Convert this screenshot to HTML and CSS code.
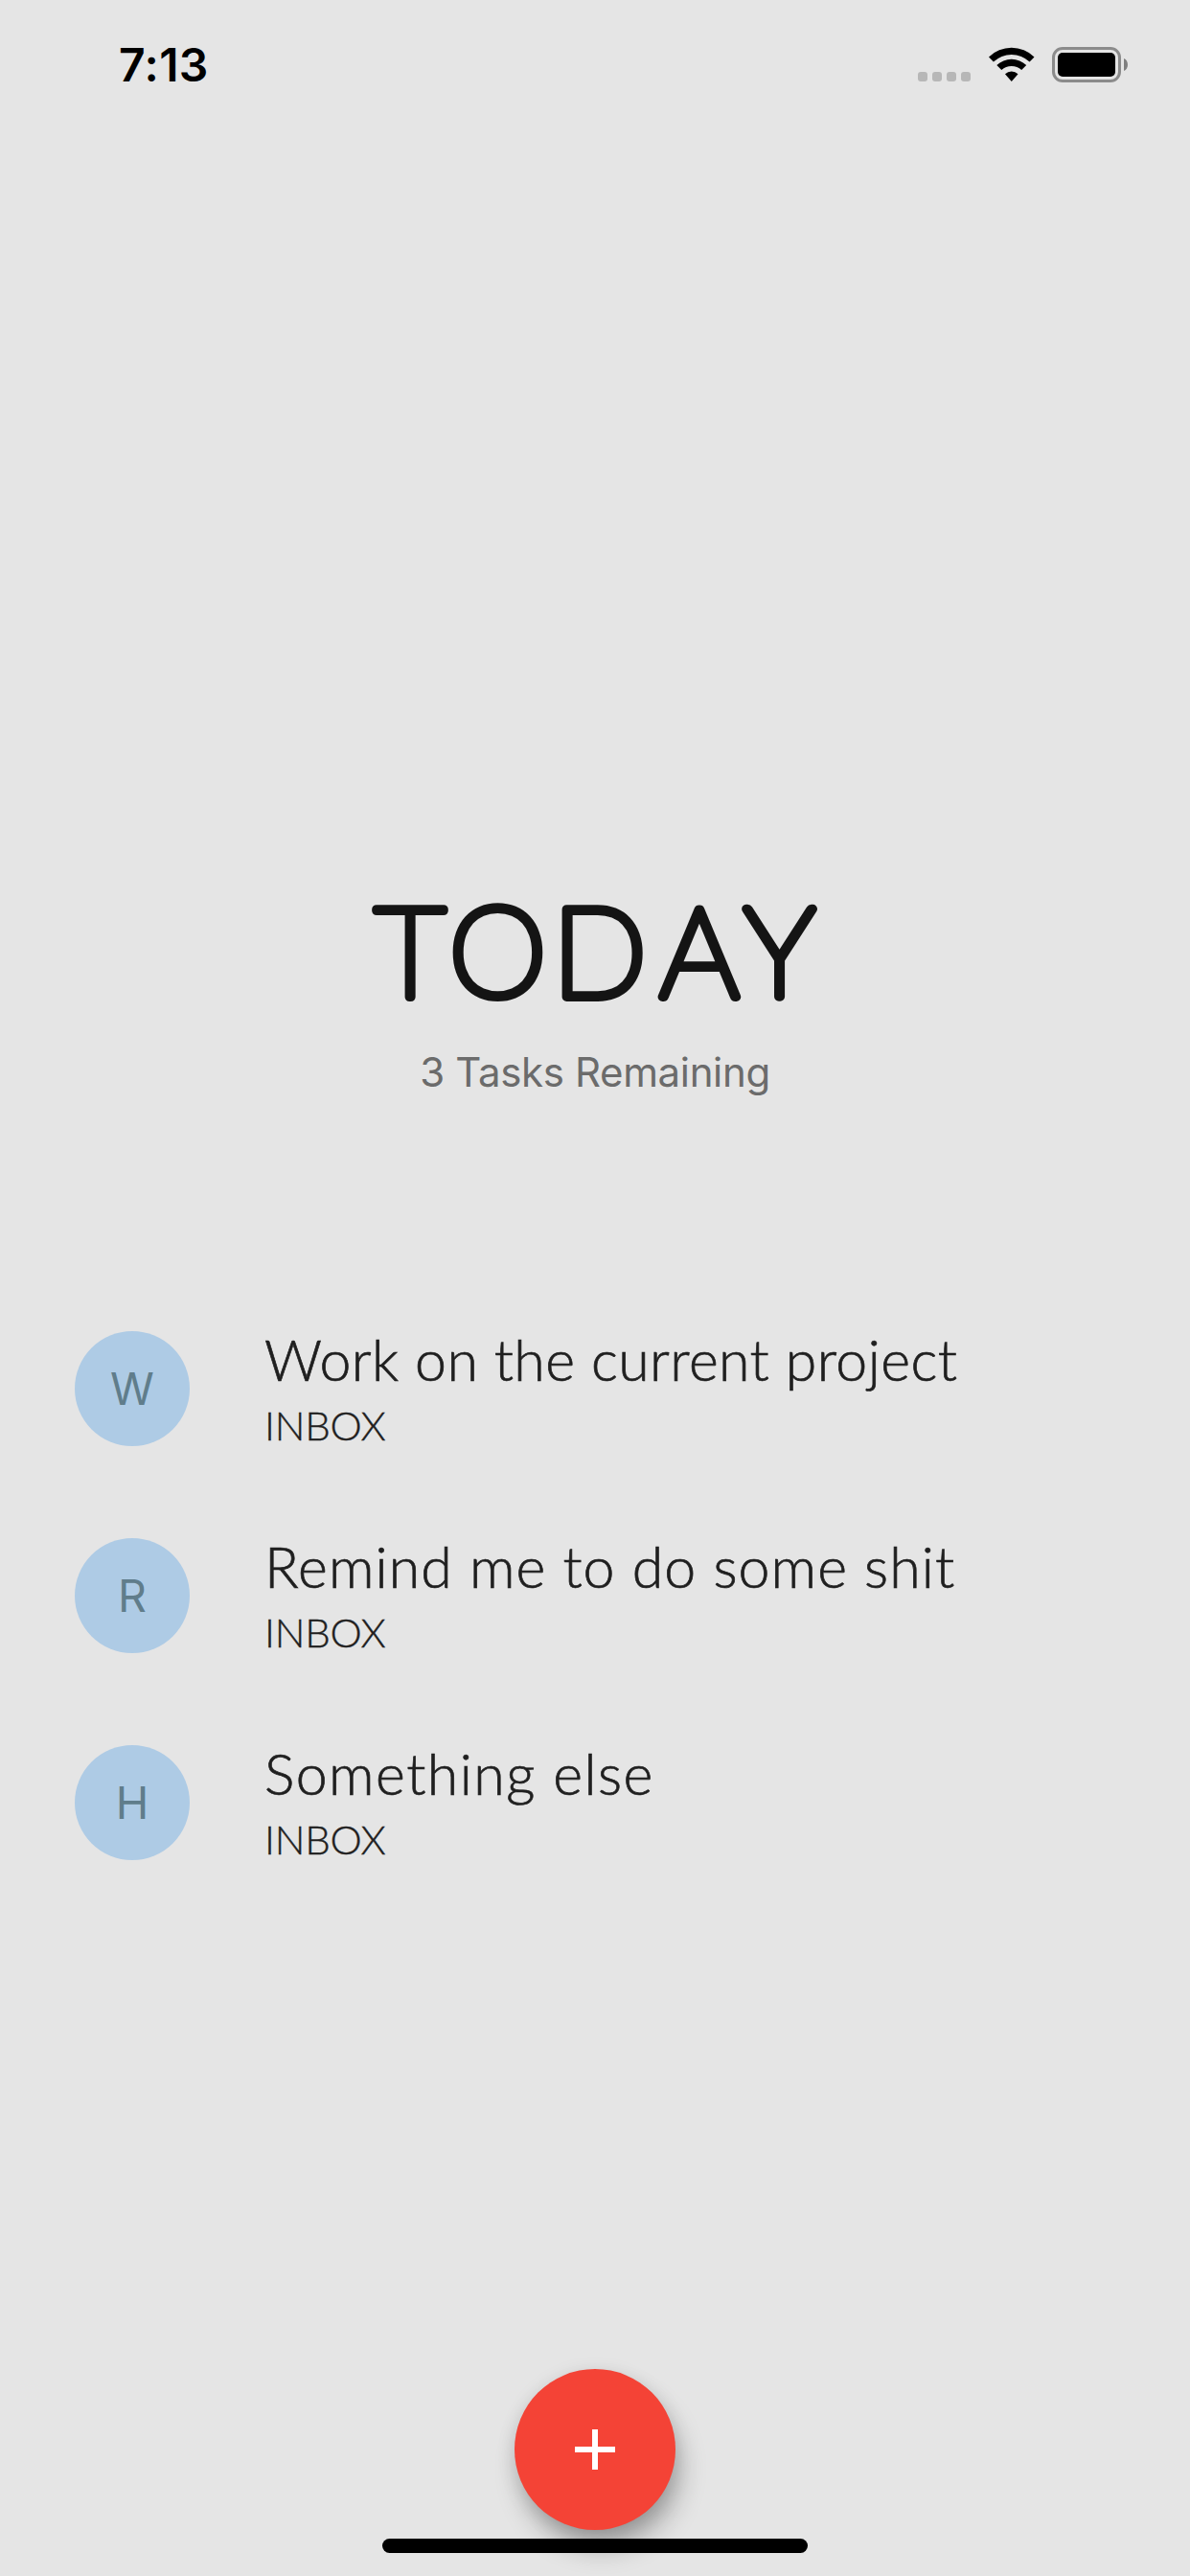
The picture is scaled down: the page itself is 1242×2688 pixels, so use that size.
FILE: index.html
```
<!DOCTYPE html>
<html lang="en">
<head>
<meta charset="utf-8">
<title>Today</title>
<link rel="stylesheet" href="styles.css">
</head>
<body>
<div class="screen">
  <header class="status">
    <span class="time">7:13</span>
    <div class="signals">
      <div class="dots"><i></i><i></i><i></i><i></i></div>
      <svg class="wifi" width="48" height="37" viewBox="0 0 48 37">
        <path d="M0 10.5A34 34 0 0 1 47.5 10.5L42.6 15.6A27 27 0 0 0 4.900 15.600Z"/>
        <path d="M8.300 19A22.300 22.300 0 0 1 39.200 19L34.200 24.100A15.200 15.200 0 0 0 13.300 24.100Z"/>
        <path d="M17 28.200A10 10 0 0 1 30.500 28.200L23.750 36Z"/>
      </svg>
      <svg class="battery" width="80" height="37" viewBox="0 0 80 37">
        <rect x="1.5" y="1.5" width="69" height="34" rx="9.5" fill="none" stroke="#8b8b8b" stroke-width="3"/>
        <rect x="6" y="6" width="60" height="25" rx="5"/>
        <path d="M75 12C80.300 14 80.300 23 75 25Z" fill="#7f7f7f"/>
      </svg>
    </div>
  </header>

  <main>
    <h1 class="heading">
      <svg width="500" height="190" viewBox="0 0 500 190">
        <text x="57 148.500 254.500 359 442.500" y="140.500">TODAY</text>
      </svg>
    </h1>
    <p class="summary">3 Tasks Remaining</p>

    <ul class="tasks">
      <li class="task">
        <span class="avatar">W</span>
        <div class="body"><div class="title work">Work on the current project</div><div class="list">INBOX</div></div>
      </li>
      <li class="task">
        <span class="avatar">R</span>
        <div class="body"><div class="title remind">Remind me to do some shit</div><div class="list">INBOX</div></div>
      </li>
      <li class="task">
        <span class="avatar">H</span>
        <div class="body"><div class="title something">Something else</div><div class="list">INBOX</div></div>
      </li>
    </ul>
  </main>

  <footer class="dock">
    <button class="add" aria-label="Add task">
      <svg width="42" height="42" viewBox="0 0 42 42"><path d="M18 0h6v18h18v6H24v18h-6V24H0v-6h18z"/></svg>
    </button>
    <div class="home"></div>
  </footer>
</div>
</body>
</html>
```
FILE: styles.css
```
* { box-sizing: border-box; }
body { margin: 0; background: #e5e5e5; font-family: Inter, sans-serif; }
.screen { width: 1242px; height: 2688px; display: flex; flex-direction: column; overflow: hidden; }

.status { height: 132px; padding: 0 64px 0 124px; display: flex; justify-content: space-between; }
.time { margin-top: 39px; font-size: 48px; font-weight: 600; line-height: 58px; letter-spacing: 0.4px; color: #000; }
.signals { display: flex; align-items: flex-start; padding-top: 49px; }
.dots { display: flex; gap: 5px; margin: 26px 19px 0 0; }
.dots i { width: 10px; height: 10px; border-radius: 3px; background: #b7b7b7; }
.wifi { margin-right: 18px; }
.signals svg { display: block; }

main { flex: 1; }
.heading { margin: 767px 0 0; display: flex; justify-content: center; }
.heading text {
  font-family: Lato, sans-serif; font-size: 130px; font-weight: 100; text-anchor: middle;
  fill: #141414; stroke: #141414; stroke-width: 9.5px; stroke-linejoin: round;
}
.summary { margin: 5px 0 0; text-align: center; font-size: 42px; line-height: 50px; letter-spacing: -0.35px; color: #6b6b6b; }

.tasks { list-style: none; margin: 245px 0 0; padding: 0 78px; }
.task { height: 216px; display: flex; align-items: flex-start; gap: 78px; }
.avatar {
  width: 120px; height: 120px; border-radius: 50%; display: flex; align-items: center; justify-content: center;
  background: #aecbe5; color: #607d8b; font-size: 46.5px;
}
.title, .list { font-family: Lato, sans-serif; font-weight: 300; color: #1f1f1f; white-space: nowrap; }
.title { font-size: 59px; line-height: 72px; margin-top: -6px; -webkit-text-stroke: 0.7px #1f1f1f; }
.work { letter-spacing: 0.43px; }
.remind { letter-spacing: 1.08px; }
.something { letter-spacing: 1.45px; }
.list { font-size: 42px; line-height: 50px; margin-top: 7px; letter-spacing: -0.2px; -webkit-text-stroke: 0.4px #1f1f1f; }

.dock { height: 216px; display: flex; flex-direction: column; align-items: center; }
.add {
  width: 168px; height: 168px; padding: 0; border: 0; border-radius: 50%;
  display: flex; align-items: center; justify-content: center; background: #f44336;
  box-shadow: 6px 20px 30px -4px rgba(0, 0, 0, 0.32), 0 4px 20px rgba(0, 0, 0, 0.1);
}
.add svg { fill: #fff; }
.home { width: 444px; height: 15px; margin-top: 9px; border-radius: 8px; background: #000; }
```
